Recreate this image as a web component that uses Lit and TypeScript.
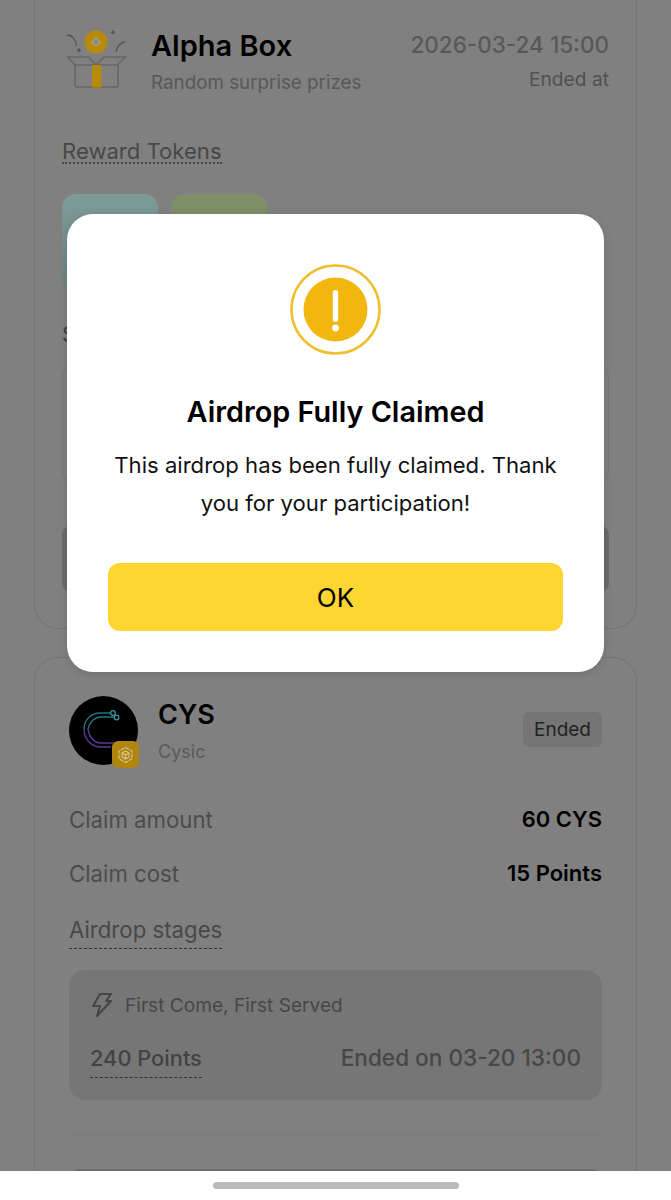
import { LitElement, html, css } from "lit";
import { customElement } from "lit/decorators.js";

@customElement("app-root")
export class AppRoot extends LitElement {
  static styles = css`
    :host { display: block; width: 671px; height: 1200px; position: relative; overflow: hidden; background: #fff; font-family: Inter, "Noto Sans", sans-serif; color: #000; }
    .page { height: 1171px; background: #808080; overflow: hidden; padding: 0 34px; box-sizing: border-box; display: flex; flex-direction: column; gap: 28px; }
    .card { flex: none; border: 1px solid #747474; border-radius: 24px; box-sizing: border-box; }
    .card1 { height: 650px; margin-top: -21px; padding: 47px 27px 0; }
    .card2 { padding: 38px 34px 0; height: 560px; }
    .head { display: flex; height: 87px; }
    .gift { width: 76px; height: 68px; flex: none; margin: -2px 14px 0 -1px; }
    .titles { flex: 1; }
    .t1 { font-size: 29px; font-weight: 600; line-height: 38px; }
    .t2 { font-size: 18.8px; line-height: 28px; margin-top: 4px; color: #585858; }
    .when { text-align: right; }
    .date { font-size: 22.5px; font-weight: 500; line-height: 36px; color: #585858; }
    .ended-at { font-size: 19.2px; line-height: 26px; color: #505050; margin-top: 3px; }
    .reward { display: inline-block; margin-top: 22px; font-size: 22.1px; line-height: 31px; color: #484848; border-bottom: 2px dotted #484848; height: 26px; }
    .tiles { display: flex; gap: 13px; margin-top: 30px; }
    .tile { width: 96px; height: 96px; border-radius: 14px; }
    .teal { background: linear-gradient(#7d9c98, #6a8280); }
    .green { background: linear-gradient(#7f9068, #788562); }
    .sale { display: inline-block; margin-top: 29px; height: 26px; font-size: 22px; line-height: 30px; color: #3e3e3e; }
    .panel { height: 122px; margin-top: 17px; border: 1px solid #777; border-radius: 14px; box-sizing: border-box; }
    .dark { height: 68px; margin-top: 40px; background: #6a6a6a; border-radius: 10px; }
    .coin-row { display: flex; align-items: flex-start; height: 74px; }
    .logo { position: relative; width: 69px; height: 72px; flex: none; margin-right: 20px; }
    .logo svg.main { display: block; }
    .badge { position: absolute; left: 43px; top: 45px; width: 27px; height: 27px; border-radius: 6px; background: #b08610; display: flex; align-items: center; justify-content: center; }
    .sym { font-size: 27px; font-weight: 600; line-height: 36px; margin-top: 1px; }
    .name { font-size: 18px; line-height: 28px; color: #5a5a5a; margin-top: 5px; }
    .status { margin-left: auto; margin-top: 16px; height: 35px; width: 79px; background: #757575; border-radius: 6px; font-size: 19px; line-height: 35px; text-align: center; color: #222; }
    .kv { display: flex; justify-content: space-between; height: 54px; align-items: center; font-size: 22.2px; color: #4c4c4c; }
    .kv b { font-size: 22px; font-weight: 600; color: #000; }
    .rows { margin-top: 22px; }
    .stages { display: inline-block; font-size: 22.2px; line-height: 32px; height: 34px; margin-top: 14px; color: #484848; border-bottom: 1px dashed #333; }
    .stage { margin-top: 21px; height: 130px; background: #767676; border-radius: 16px; padding: 0 21px; box-sizing: border-box; }
    .kind { display: flex; align-items: center; gap: 12px; height: 70px; font-size: 19.1px; color: #474747; }
    .kind svg { flex: none; margin-left: 1px; }
    .sr { display: flex; justify-content: space-between; align-items: flex-start; font-size: 22px; color: #434343; line-height: 36px; }
    .pts { height: 37px; border-bottom: 1px dashed #333; font-weight: 500; font-size: 21.8px; }
    .ended-on { color: #474747; font-weight: 500; font-size: 22.6px; }
    .rule { height: 1px; background: #797979; margin-top: 34px; }
    .next { height: 60px; margin-top: 34px; background: #6c6c6c; border-radius: 10px; }
    .home { height: 29px; display: flex; justify-content: center; padding-top: 11px; box-sizing: border-box; }
    .bar { width: 246px; height: 7px; border-radius: 4px; background: #bbb; }
    .scrim { position: absolute; left: 0; right: 0; top: 0; height: 1171px; display: flex; justify-content: center; align-items: flex-start; padding-top: 214px; box-sizing: border-box; }
    .modal { width: 537px; height: 458px; background: #fff; border-radius: 26px; box-shadow: 0 2px 10px rgba(0,0,0,.12); padding: 50px 41px 0; box-sizing: border-box; display: flex; flex-direction: column; align-items: center; text-align: center; }
    .modal svg { display: block; flex: none; }
    .m-title { font-size: 28.8px; font-weight: 600; line-height: 40px; margin-top: 37px; color: #000; }
    .m-body { font-size: 22.1px; line-height: 38px; margin-top: 14px; color: #111; }
    .ok { margin-top: 41px; width: 100%; height: 68px; border: 0; border-radius: 12px; background: #fed531; font: inherit; font-size: 26px; color: #000; padding: 0; }
  `;

  render() {
    return html`
      <div class="page">
        <section class="card card1">
          <div class="head">
            <svg class="gift" viewBox="0 0 76 68" fill="none">
              <circle cx="35" cy="17" r="11.5" fill="#b88a0c"/>
              <path d="M35 12.5l4.500 4.500-4.500 4.500-4.500-4.500z" fill="#8a8a8a" stroke="#d0c8a0" stroke-width=".6"/>
              <path d="M6 10c5 0 9 4 9.500 11M64 17c-4 0-8 4-9 10" stroke="#555" stroke-width="1.300"/>
              <path d="M52 5l2.200 2.200-2.200 2.200-2.200-2.200zM18 23l2.200 2.200-2.200 2.200-2.200-2.200z" fill="#555"/>
              <path d="M14 40v20q0 2 2 2h39q2 0 2-2V40" stroke="#666" stroke-width="1.500"/>
              <path d="M6.500 32h21l7.500 8H14zM35 40l8-8h22l-9 8z" stroke="#666" stroke-width="1.500" stroke-linejoin="round"/>
              <rect x="31" y="40" width="9.500" height="22.500" fill="#b88a0c"/>
            </svg>
            <div class="titles">
              <div class="t1">Alpha Box</div>
              <div class="t2">Random surprise prizes</div>
            </div>
            <div class="when">
              <div class="date">2026-03-24 15:00</div>
              <div class="ended-at">Ended at</div>
            </div>
          </div>
          <div class="reward">Reward Tokens</div>
          <div class="tiles"><div class="tile teal"></div><div class="tile green"></div></div>
          <div class="sale">S</div>
          <div class="panel"></div>
          <div class="dark"></div>
        </section>
        <section class="card card2">
          <div class="coin-row">
            <div class="logo">
              <svg class="main" width="69" height="69" viewBox="0 0 69 69" fill="none">
                <circle cx="34.500" cy="34.500" r="34.500" fill="#000"/>
                <path d="M42 17H31C22 17 15 24 15 33" stroke="#24767c" stroke-width="1.400"/>
                <path d="M45 21H32C25 21 20 27 19 33" stroke="#24767c" stroke-width="1.400"/>
                <path d="M15 33C15 43 22 51 32 51H42M19 33C20 41 25 47 32 47H44" stroke="#5a3a94" stroke-width="1.400"/>
                <circle cx="44" cy="17" r="2.300" stroke="#3d9aa0" stroke-width="1.200"/>
                <circle cx="47.500" cy="21.500" r="2.300" stroke="#3d9aa0" stroke-width="1.200"/>
              </svg>
              <div class="badge">
                <svg width="17" height="18" viewBox="0 0 17 18" fill="none" stroke="#d9c68a" stroke-width="1.100">
                  <path d="M8.500 1.500l6.500 3.700v7.600l-6.500 3.700L2 12.800V5.200z" stroke-dasharray="4 1"/>
                  <path d="M8.500 5l3.500 2v4l-3.500 2L5 11V7zM5 7l3.500 2L12 7M8.500 9v4"/>
                </svg>
              </div>
            </div>
            <div>
              <div class="sym">CYS</div>
              <div class="name">Cysic</div>
            </div>
            <div class="status">Ended</div>
          </div>
          <div class="rows">
            <div class="kv"><span>Claim amount</span><b>60 CYS</b></div>
            <div class="kv"><span>Claim cost</span><b>15 Points</b></div>
          </div>
          <div class="stages">Airdrop stages</div>
          <div class="stage">
            <div class="kind">
              <svg width="22" height="26" viewBox="0 0 22 26" fill="none" stroke="#444" stroke-width="2" stroke-linejoin="round" stroke-linecap="round">
                <path d="M9 2h11l-5 7h5L6 24l3-10H2z"/>
              </svg>
              <span>First Come, First Served</span>
            </div>
            <div class="sr"><span class="pts">240 Points</span><span class="ended-on">Ended on 03-20 13:00</span></div>
          </div>
          <div class="rule"></div>
          <div class="next"></div>
        </section>
      </div>
      <div class="home"><div class="bar"></div></div>
      <div class="scrim">
        <div class="modal">
          <svg width="91" height="91" viewBox="0 0 91 91">
            <circle cx="45.500" cy="45.500" r="44" fill="none" stroke="#efbe2c" stroke-width="2.500"/>
            <circle cx="45.500" cy="45.500" r="32" fill="#f2b70c"/>
            <rect x="42.800" y="26" width="5.400" height="32" rx="2.700" fill="#fff"/>
            <circle cx="45.500" cy="64" r="3.400" fill="#fff"/>
          </svg>
          <div class="m-title">Airdrop Fully Claimed</div>
          <div class="m-body">This airdrop has been fully claimed. Thank you for your participation!</div>
          <button class="ok">OK</button>
        </div>
      </div>
    `;
  }
}
